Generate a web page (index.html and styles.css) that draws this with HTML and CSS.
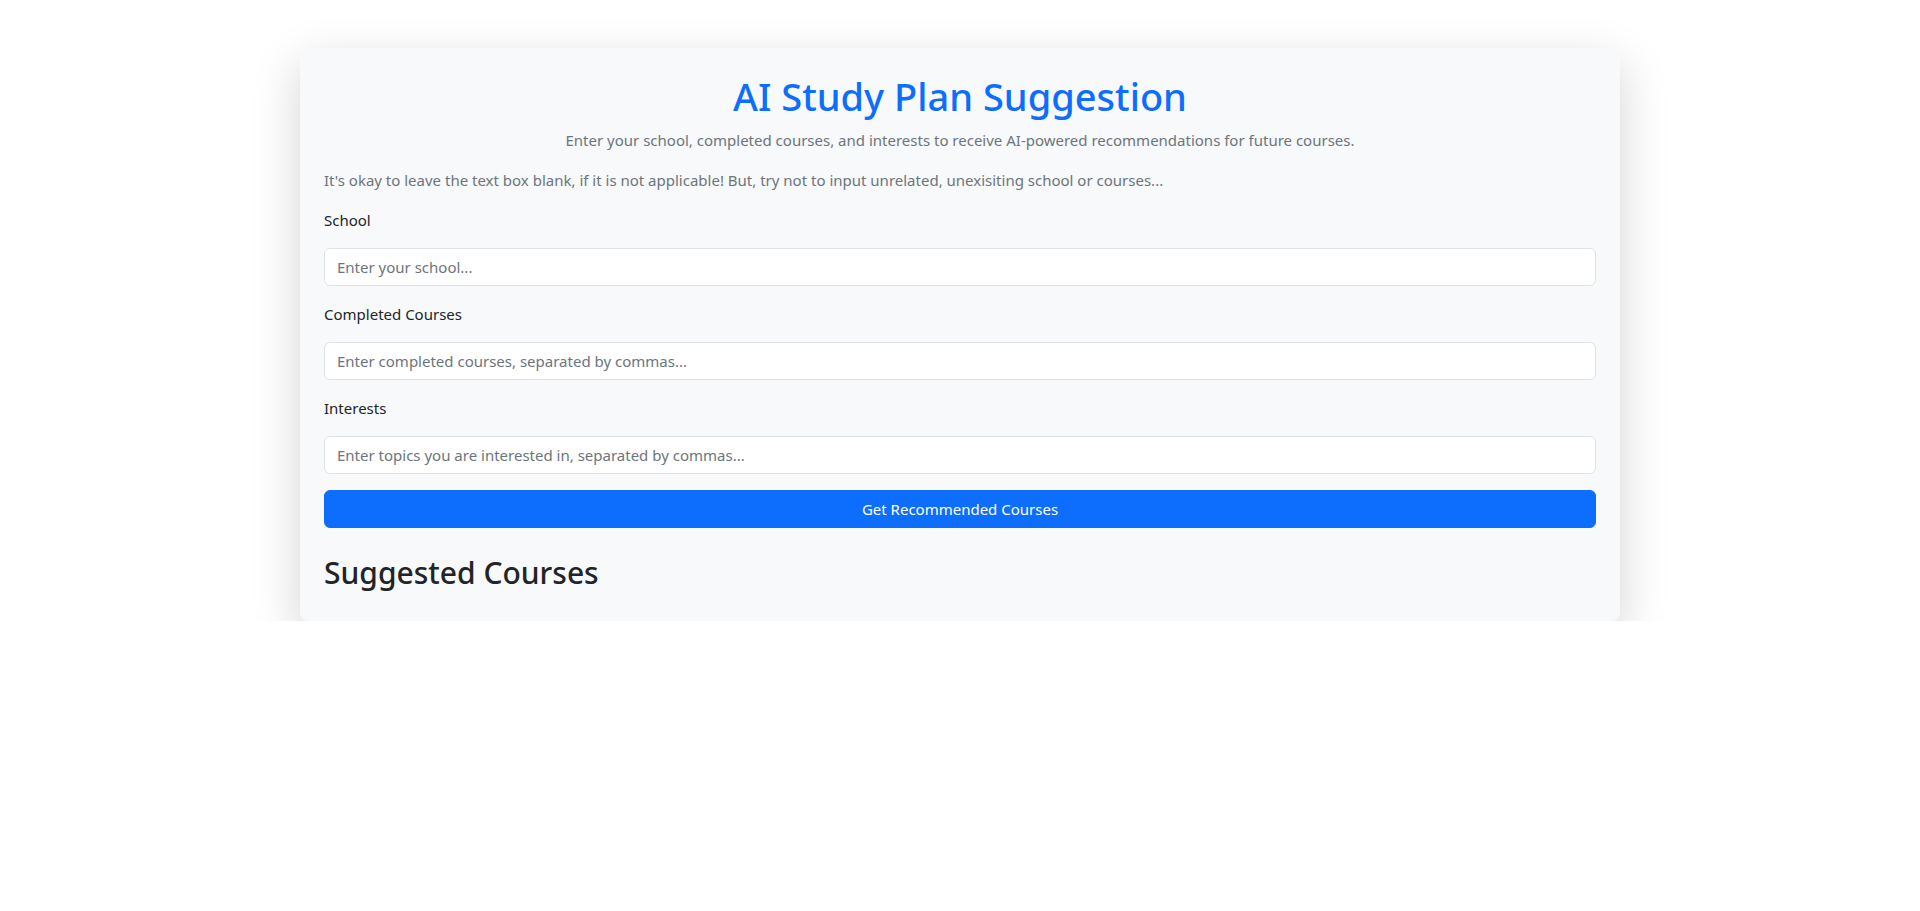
FILE: index.html
```html
<!DOCTYPE html>
<html lang="en">
<head>
<meta charset="utf-8">
<title>AI Study Plan Suggestion</title>
<link rel="stylesheet" href="styles.css">
</head>
<body>
<main class="card">
  <h1 class="title">AI Study Plan Suggestion</h1>
  <p class="subtitle">Enter your school, completed courses, and interests to receive AI-powered recommendations for future courses.</p>
  <p class="note">It's okay to leave the text box blank, if it is not applicable! But, try not to input unrelated, unexisiting school or courses...</p>
  <form class="form">
    <div class="field">
      <label class="label" for="school">School</label>
      <input class="input" id="school" type="text" placeholder="Enter your school...">
    </div>
    <div class="field">
      <label class="label" for="courses">Completed Courses</label>
      <input class="input" id="courses" type="text" placeholder="Enter completed courses, separated by commas...">
    </div>
    <div class="field">
      <label class="label" for="interests">Interests</label>
      <input class="input" id="interests" type="text" placeholder="Enter topics you are interested in, separated by commas...">
    </div>
    <button class="btn" type="button">Get Recommended Courses</button>
  </form>
  <h2 class="results-title">Suggested Courses</h2>
</main>
</body>
</html>
```

FILE: styles.css
```css
* { box-sizing: border-box; }
html, body { margin: 0; padding: 0; }
body {
  background: #fff;
  font-family: "Noto Sans", "Open Sans", sans-serif;
  font-size: 15px;
  line-height: 24px;
  color: #212529;
}
.card {
  width: 1320px;
  margin: 48px auto 0;
  padding: 24px;
  background: #f8f9fa;
  border-radius: 8px;
  box-shadow: 0 16px 48px rgba(0, 0, 0, 0.175);
}
.title {
  margin: 0 0 8px;
  text-align: center;
  color: #0d6efd;
  font-size: 38px;
  font-weight: 500;
  line-height: 48px;
}
.subtitle {
  margin: 0 0 16px;
  text-align: center;
  color: #6c757d;
}
.note {
  margin: 0 0 16px;
  color: #6c757d;
}
.form { display: flex; flex-direction: column; gap: 16px; }
.field { display: flex; flex-direction: column; gap: 16px; }
.label { display: block; line-height: 24px; }
.input {
  display: block;
  width: 100%;
  height: 38px;
  padding: 6px 12px;
  font: inherit;
  color: #212529;
  background: #fff;
  border: 1px solid #dee2e6;
  border-radius: 6px;
  outline: none;
}
.input::placeholder { color: #6c757d; opacity: 1; }
.btn {
  display: block;
  width: 100%;
  height: 38px;
  padding: 6px 12px;
  font: inherit;
  color: #fff;
  background: #0d6efd;
  border: 1px solid #0d6efd;
  border-radius: 6px;
  cursor: pointer;
}
.results-title {
  margin: 25px 0 5px;
  font-size: 30px;
  font-weight: 500;
  line-height: 39px;
  color: #212529;
}
```
